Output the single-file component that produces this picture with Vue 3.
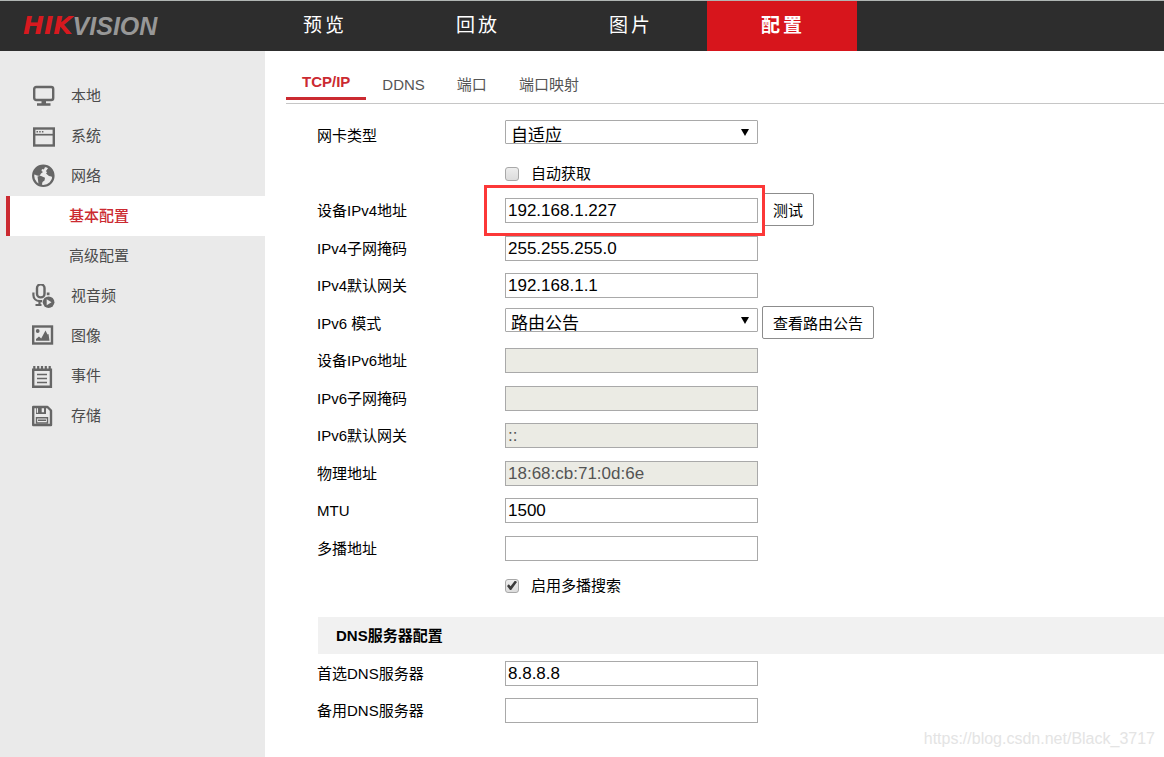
<script setup>
import { ref } from 'vue'

const mainNav = ['预览', '回放', '图片', '配置']
const activeNav = ref('配置')

const sideMenu = [
  { label: '本地', icon: 'monitor' },
  { label: '系统', icon: 'window' },
  { label: '网络', icon: 'globe' },
  { label: '基本配置', sub: true, active: true },
  { label: '高级配置', sub: true },
  { label: '视音频', icon: 'mic' },
  { label: '图像', icon: 'picture' },
  { label: '事件', icon: 'notepad' },
  { label: '存储', icon: 'disk' },
]

const tabs = ['TCP/IP', 'DDNS', '端口', '端口映射']
const activeTab = ref('TCP/IP')

const rows = ref([
  { id: 'nic', label: '网卡类型', type: 'select', value: '自适应', options: ['自适应', '10M半双工', '100M全双工'] },
  { id: 'dhcp', type: 'check', text: '自动获取', value: false },
  { id: 'ipv4', label: '设备IPv4地址', type: 'text', value: '192.168.1.227', marked: true, button: '测试' },
  { id: 'mask4', label: 'IPv4子网掩码', type: 'text', value: '255.255.255.0' },
  { id: 'gate4', label: 'IPv4默认网关', type: 'text', value: '192.168.1.1' },
  { id: 'mode6', label: 'IPv6 模式', type: 'select', value: '路由公告', options: ['路由公告', '手动', 'DHCP'], button: '查看路由公告' },
  { id: 'ipv6', label: '设备IPv6地址', type: 'text', value: '', disabled: true },
  { id: 'mask6', label: 'IPv6子网掩码', type: 'text', value: '', disabled: true },
  { id: 'gate6', label: 'IPv6默认网关', type: 'text', value: '::', disabled: true },
  { id: 'mac', label: '物理地址', type: 'text', value: '18:68:cb:71:0d:6e', disabled: true },
  { id: 'mtu', label: 'MTU', type: 'text', value: '1500' },
  { id: 'multicast', label: '多播地址', type: 'text', value: '' },
  { id: 'discover', type: 'check', text: '启用多播搜索', value: true },
])

const dnsRows = ref([
  { id: 'dns1', label: '首选DNS服务器', value: '8.8.8.8' },
  { id: 'dns2', label: '备用DNS服务器', value: '' },
])
</script>

<template>
  <div class="page">
    <header class="topbar">
      <a class="logo" href="#"><span class="logo-hik">HIK</span><span class="logo-vision">VISION</span></a>
      <nav class="main-nav">
        <a
          v-for="item in mainNav"
          :key="item"
          href="#"
          class="nav-item"
          :class="{ active: item === activeNav }"
          @click.prevent="activeNav = item"
        >{{ item }}</a>
      </nav>
    </header>

    <div class="body">
      <aside class="sidebar">
        <a
          v-for="item in sideMenu"
          :key="item.label"
          href="#"
          class="side-item"
          :class="{ sub: item.sub, active: item.active }"
        >
          <svg v-if="item.icon" class="icon" viewBox="0 0 24 24" aria-hidden="true">
            <g v-if="item.icon === 'monitor'">
              <rect x="2.200" y="3" width="19" height="13" rx="2" fill="none" stroke="#666" stroke-width="2.400" />
              <path d="M9.500 16.500h4.500v2.700h4.500v2.600h-13.500v-2.600h4.500z" fill="#666" />
            </g>
            <g v-else-if="item.icon === 'window'">
              <rect x="2.200" y="4.500" width="19.600" height="17" fill="none" stroke="#666" stroke-width="2.400" />
              <path d="M2 10.700h20" stroke="#666" stroke-width="1.700" />
              <path d="M4.500 7.800h1.500M7.200 7.800h1.500M9.900 7.800h1.500" stroke="#666" stroke-width="1.500" />
            </g>
            <g v-else-if="item.icon === 'globe'">
              <circle cx="11.300" cy="11.800" r="10.200" fill="none" stroke="#666" stroke-width="2.200" />
              <path d="M2 7.500C4.500 3 8 1.500 12 2l1 1.800-1.500 1.700-1.500-.5-.5 2 1.500 1-2 1.500-1.500 2.500-2.500-.5L1.500 10z" fill="#666" />
              <path d="M5.500 12.500l3-.7 4.500 2-.5 2.700-2 1.500-.8 3.500-3.200-1.500-.5-4z" fill="#666" />
              <path d="M14 7l2.500-3.500 3 1.500 2 4.500-.5 5.500-1.500-2.500-2.500-.5-3-2.500 1-1z" fill="#666" />
            </g>
            <g v-else-if="item.icon === 'mic'">
              <rect x="5" y="0.400" width="7.500" height="13" rx="3.700" fill="none" stroke="#666" stroke-width="2.400" />
              <path d="M1.400 8.500v2.500c0 3.500 2.500 6 6.300 6.200h2.500M7.500 17v4M3.500 21h6" fill="none" stroke="#666" stroke-width="2.200" />
              <rect x="14.800" y="8.500" width="2.700" height="2.700" fill="#666" />
              <circle cx="16.600" cy="18.200" r="5.800" fill="#666" />
              <path d="M14.700 15.200l4.800 3-4.800 3z" fill="#eaeaea" />
            </g>
            <g v-else-if="item.icon === 'picture'">
              <rect x="1.200" y="2.500" width="18.800" height="17" fill="none" stroke="#666" stroke-width="2.400" />
              <circle cx="5.700" cy="7" r="1.900" fill="#666" />
              <path d="M4 16.700v-1.800l3-2.500 2.200 2L13.500 6.500l2 4 1-.5 1 6.700z" fill="#666" />
            </g>
            <g v-else-if="item.icon === 'notepad'">
              <path d="M1.200 5.700h17.700V22.800H1.200z" fill="none" stroke="#666" stroke-width="2.400" />
              <path d="M2.300 2v4M6.200 2v4M10 2v4M13.800 2v4M17.700 2v4" stroke="#666" stroke-width="2.200" />
              <path d="M5 10.500h10M5 14.500h10M5 18.500h10" stroke="#666" stroke-width="1.500" />
            </g>
            <g v-else>
              <path d="M1.200 3h14.300L19 6.500V21H1.200z" fill="none" stroke="#666" stroke-width="2.400" stroke-linejoin="round" />
              <path d="M4 3h10v7H4z" fill="#666" />
              <path d="M4.800 4.200h1.200v4.500h-1.200zM9.700 4.200h2.300v4h-2.300z" fill="#eaeaea" />
              <path d="M4.500 13.700h11v5.300h-11zM6 16.300h8" fill="none" stroke="#666" stroke-width="1.400" />
            </g>
          </svg>
          <span class="side-label">{{ item.label }}</span>
        </a>
      </aside>

      <main class="content">
        <nav class="tabs">
          <a
            v-for="tab in tabs"
            :key="tab"
            href="#"
            class="tab"
            :class="{ active: tab === activeTab }"
            @click.prevent="activeTab = tab"
          >{{ tab }}</a>
        </nav>

        <form class="form" @submit.prevent>
          <div v-for="row in rows" :key="row.id" class="row">
            <label v-if="row.label" class="label" :for="row.id">{{ row.label }}</label>
            <span v-else class="label"></span>

            <div v-if="row.type === 'select'" class="field select-field">
              <select :id="row.id" v-model="row.value" class="select">
                <option v-for="option in row.options" :key="option">{{ option }}</option>
              </select>
            </div>
            <label v-else-if="row.type === 'check'" class="check-label">
              <input v-model="row.value" type="checkbox" class="checkbox" />
              <span class="check-text">{{ row.text }}</span>
            </label>
            <div v-else class="field" :class="{ marked: row.marked }">
              <input :id="row.id" v-model="row.value" type="text" class="input" :disabled="row.disabled" />
            </div>

            <button v-if="row.button" type="button" class="button">{{ row.button }}</button>
          </div>

          <h2 class="section">DNS服务器配置</h2>

          <div v-for="row in dnsRows" :key="row.id" class="row">
            <label class="label" :for="row.id">{{ row.label }}</label>
            <div class="field">
              <input :id="row.id" v-model="row.value" type="text" class="input" />
            </div>
          </div>
        </form>
      </main>
    </div>

    <div class="watermark">https://blog.csdn.net/Black_3717</div>
  </div>
</template>

<style>
body {
  margin: 0;
  background: #fff;
}
</style>

<style scoped>
.page,
.page * {
  box-sizing: border-box;
}

.page {
  position: relative;
  display: flex;
  flex-direction: column;
  min-height: 100vh;
  font-family: "Liberation Sans", "Noto Sans CJK SC", sans-serif;
  font-size: 15px;
  color: #000;
}

a {
  color: inherit;
  text-decoration: none;
}

.topbar {
  display: flex;
  height: 51px;
  border-top: 1px solid #b0b5b3;
  background: #2d2d2d;
}

.logo {
  display: flex;
  align-items: center;
  width: 248px;
  padding-left: 23px;
  font-size: 25px;
  font-style: italic;
  font-weight: 700;
  line-height: 50px;
}

.logo-hik {
  font-family: "DejaVu Sans", sans-serif;
  color: #d7191f;
}

.logo-vision {
  color: #979797;
}

.main-nav {
  display: flex;
  gap: 3px;
}

.nav-item {
  width: 150px;
  padding-left: 4px;
  font-size: 19px;
  letter-spacing: 3px;
  line-height: 50px;
  text-align: center;
  color: #fff;
}

.nav-item.active {
  padding-left: 2px;
  background: #d7151c;
  font-weight: 700;
}

.body {
  display: flex;
  flex: 1;
}

.sidebar {
  flex: none;
  width: 265px;
  padding-top: 25px;
  background: #eaeaea;
}

.side-item {
  display: flex;
  align-items: center;
  gap: 15px;
  height: 40px;
  padding-left: 32px;
  color: #4b4b4b;
}

.side-item.sub {
  padding-left: 69px;
}

.side-item.sub.active {
  margin-left: 6px;
  padding-left: 59px;
  border-left: 4px solid #cb2a31;
  background: #fff;
  font-weight: 500;
  color: #cb2a31;
}

.side-label {
  padding-bottom: 3px;
}

.icon {
  flex: none;
  width: 24px;
  height: 24px;
}

.content {
  flex: 1;
  min-width: 0;
  padding-left: 21px;
}

.tabs {
  display: flex;
  align-items: flex-start;
  height: 53px;
  padding-top: 13px;
  border-bottom: 1px solid #c6c6c6;
}

.tab {
  height: 36px;
  padding: 0 16px;
  line-height: 41px;
  color: #555;
}

.tab.active {
  border-bottom: 3px solid #cb2a31;
  font-weight: 700;
  line-height: 36px;
  color: #cb2a31;
}

.form {
  padding: 13px 0 26px 31px;
}

.row {
  display: flex;
  align-items: center;
  gap: 4px;
  height: 37px;
}

.row:nth-of-type(odd) {
  margin-bottom: 1px;
}

.label {
  width: 184px;
  line-height: 25px;
  white-space: nowrap;
}

.field {
  position: relative;
  width: 253px;
}

.input {
  display: block;
  width: 100%;
  height: 25px;
  padding: 0 2px;
  border: 1px solid #a9a9a9;
  border-radius: 0;
  background: #fff;
  font-family: inherit;
  font-size: 17px;
  color: #000;
}

.input:disabled {
  background: #ebebe4;
  color: #545454;
}

.marked::after {
  content: "";
  position: absolute;
  z-index: 1;
  top: -13px;
  right: -7px;
  bottom: -13px;
  left: -21px;
  border: 3px solid #fc3838;
  pointer-events: none;
}

.select-field {
  margin-bottom: 7px;
}

.select-field::after {
  content: "";
  position: absolute;
  top: 9px;
  right: 9px;
  width: 8px;
  height: 7px;
  background: #000;
  clip-path: polygon(0 0, 100% 0, 50% 100%);
  pointer-events: none;
}

.select {
  display: block;
  width: 100%;
  height: 24px;
  padding: 3px 24px 0 5px;
  border: 1px solid #a9a9a9;
  border-radius: 1px;
  appearance: none;
  background: #fff;
  font-family: inherit;
  font-size: 17px;
  line-height: 24px;
  color: #000;
}

.check-label {
  display: flex;
  align-items: center;
  gap: 12px;
}

.check-text {
  padding-bottom: 3px;
}

.checkbox {
  width: 14px;
  height: 14px;
  margin: 0;
  border: 1px solid #a8a8a8;
  border-radius: 3px;
  appearance: none;
  background: linear-gradient(#ededed, #dcdcdc);
}

.checkbox:checked::before {
  content: "";
  display: block;
  width: 10px;
  height: 10px;
  margin: 1px;
  background: #3c3c3c;
  clip-path: polygon(0 55%, 18% 38%, 36% 58%, 80% 0, 100% 14%, 42% 96%, 30% 96%);
}

.button {
  height: 33px;
  margin-bottom: 2px;
  padding: 0 10px;
  border: 1px solid #8c8c8c;
  border-radius: 2px;
  background: #fff;
  font-family: inherit;
  font-size: 15px;
  color: #000;
}

.section {
  margin: 13px 0 1px 1px;
  padding-left: 18px;
  background: #f1f1f1;
  font-size: 15px;
  font-weight: 700;
  line-height: 37px;
}

.watermark {
  position: absolute;
  right: 9px;
  bottom: 8px;
  font-size: 16px;
  line-height: 20px;
  color: #e4e4e4;
}
</style>
